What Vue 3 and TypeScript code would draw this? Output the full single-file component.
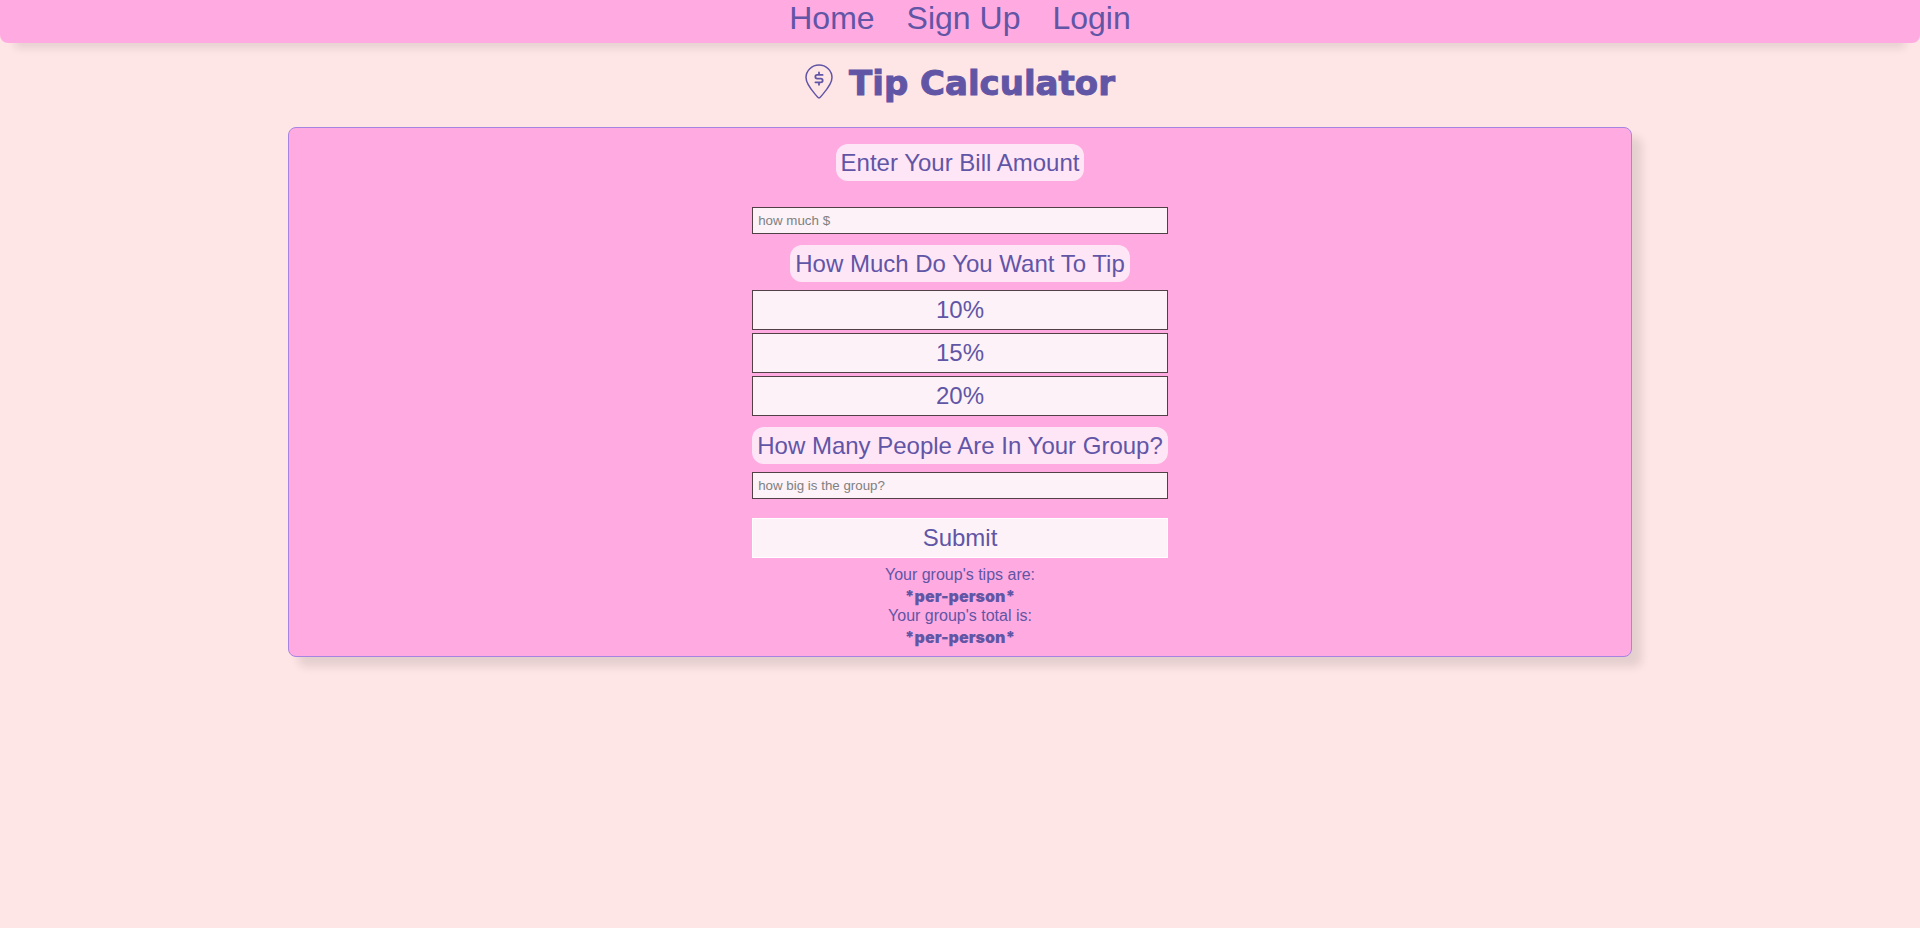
<script setup lang="ts">
import { ref } from 'vue'

const links: string[] = ['Home', 'Sign Up', 'Login']
const tips: number[] = [10, 15, 20]
const results: string[] = ["Your group's tips are:", "Your group's total is:"]

const bill = ref<string>('')
const people = ref<string>('')
const tip = ref<number | null>(null)
</script>

<template>
  <div class="page">
    <nav class="nav">
      <a v-for="link in links" :key="link" href="#">{{ link }}</a>
    </nav>
    <header class="title">
      <svg class="pin" viewBox="0 0 28 35" aria-hidden="true">
        <path d="M14 1C6.800 1 1 6.700 1 13.600C1 21 8 27.500 12.600 33.100Q14 34.700 15.400 33.100C20 27.500 27 21 27 13.600C27 6.700 21.200 1 14 1Z" />
        <path class="dollar" d="M14 8.400V10.800M14 18.400V20.800M17.600 10.900H12.200A1.850 1.850 0 0 0 12.200 14.600H15.800A1.850 1.850 0 0 1 15.800 18.300H10.400" />
      </svg>
      <h1>Tip Calculator</h1>
    </header>
    <main class="card">
      <form class="form" @submit.prevent>
        <label class="pill" for="bill">Enter Your Bill Amount</label>
        <input id="bill" v-model="bill" class="field bill" type="text" placeholder="how much $" />
        <h2 id="tip-label" class="pill">How Much Do You Want To Tip</h2>
        <div class="tips" role="group" aria-labelledby="tip-label">
          <button v-for="t in tips" :key="t" class="button" type="button" :aria-pressed="tip === t" @click="tip = t">{{ t }}%</button>
        </div>
        <label class="pill" for="people">How Many People Are In Your Group?</label>
        <input id="people" v-model="people" class="field" type="text" placeholder="how big is the group?" />
        <button class="button submit" type="submit">Submit</button>
      </form>
      <div v-for="result in results" :key="result" class="result">
        <p>{{ result }}</p>
        <strong>*per-person*</strong>
      </div>
    </main>
  </div>
</template>

<style>
body {
  margin: 0;
  background: #ffe6e6;
}
</style>

<style scoped>
.page {
  min-height: 100vh;
  color: #6155a6;
  font-family: "Liberation Sans", Arial, sans-serif;
}

.nav {
  display: flex;
  justify-content: center;
  gap: 32px;
  padding-bottom: 6px;
  border-radius: 0 0 8px 8px;
  background: #ffabe1;
  box-shadow: 0 20px 8px -15px rgba(0, 0, 0, 0.1);
  font-size: 32px;
  line-height: 37px;
}

.nav a {
  color: inherit;
  text-decoration: none;
}

.title {
  display: flex;
  align-items: center;
  justify-content: center;
  gap: 16px;
  height: 50px;
  margin: 15px 0 19px;
}

.title h1 {
  margin: 0;
  font-family: "Arial Black", "DejaVu Sans", sans-serif;
  font-size: 34px;
  font-weight: 900;
  line-height: 50px;
  -webkit-text-stroke: 1px currentColor;
}

.pin {
  width: 28px;
  height: 35px;
  margin-bottom: 3px;
  fill: none;
  stroke: #6155a6;
  stroke-width: 1.5;
  stroke-linecap: round;
  stroke-linejoin: round;
}

.dollar {
  stroke-width: 1.8;
}

.card {
  box-sizing: border-box;
  display: flex;
  flex-direction: column;
  align-items: center;
  width: 70%;
  margin: 0 auto;
  padding: 16px 16px 8px;
  border: 1px solid #a685e2;
  border-radius: 8px;
  background: #ffabe1;
  box-shadow: 10px 10px 8px rgba(0, 0, 0, 0.1);
}

.form {
  display: flex;
  flex-direction: column;
  align-items: center;
  margin-bottom: 8px;
}

.pill {
  margin: 0 0 8px;
  padding: 5px;
  border-radius: 12px;
  background: #ffe6f7;
  font-size: 24px;
  font-weight: 400;
  line-height: 27px;
}

.field,
.button {
  box-sizing: border-box;
  width: 100%;
  border: 1px solid #514045;
  border-radius: 0;
  background: #fcf2f8;
  font-family: inherit;
}

.field {
  height: 27px;
  padding: 4px 5px;
  color: #6155a6;
}

.field::placeholder {
  color: #808080;
}

.field.bill {
  margin: 18px 0 11px;
}

.tips {
  display: flex;
  flex-direction: column;
  gap: 3px;
  align-self: stretch;
  margin-bottom: 11px;
}

.button {
  height: 40px;
  padding: 0 0 2px;
  color: #6155a6;
  font-size: 24px;
  line-height: 27px;
  cursor: pointer;
}

.button.submit {
  margin-top: 19px;
  border-color: #ffffff;
}

.result {
  font-size: 16px;
  line-height: 18px;
  text-align: center;
}

.result p {
  margin: 0 0 2px;
}

.result strong {
  display: block;
  font-family: "Arial Black", Inter, sans-serif;
  font-weight: 900;
  line-height: 21px;
}
</style>
